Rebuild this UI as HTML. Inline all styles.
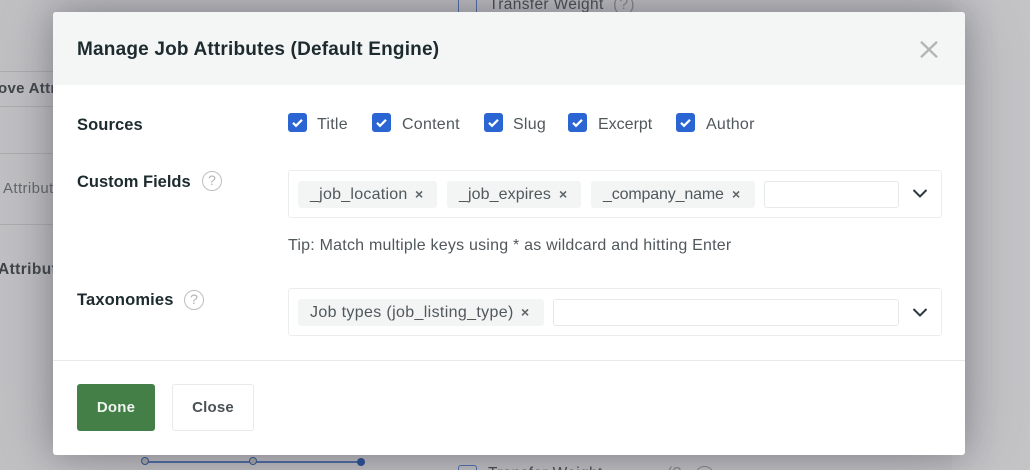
<!DOCTYPE html>
<html>
<head>
<meta charset="utf-8">
<style>
html,body{margin:0;padding:0;width:1030px;height:470px;overflow:hidden;background:#c0c0c2;font-family:"Liberation Sans",sans-serif}
*{box-sizing:border-box}
#root{position:relative;width:1030px;height:470px;overflow:hidden;background:#c2c2c4}
.a{position:absolute;white-space:nowrap}
.modal{position:absolute;left:53px;top:12px;width:912px;height:443px;background:#fff;border-radius:3px;box-shadow:0 0 30px rgba(70,70,85,.36),0 0 70px rgba(70,70,85,.3)}
.lab{font-weight:bold;font-size:16.5px;color:#1d2b2f;line-height:20px}
.opt{font-size:16px;color:#50585c;line-height:20px;letter-spacing:.25px}
.cb{position:absolute;top:113px;width:19px;height:19px;background:#2b65d4;border-radius:3px}
.cb svg{position:absolute;left:0;top:0}
.box{position:absolute;left:288px;width:654px;height:48px;border:1px solid #ebedee;border-radius:3px;background:#fff}
.tag{position:absolute;height:27px;background:#f3f5f5;border-radius:3px}
.tag span{position:absolute;top:0;line-height:27px;font-size:16px;color:#50585c;white-space:nowrap}
.tag span.x{font-size:14px;font-weight:bold;color:#5c6468;line-height:26px}
.inp{position:absolute;height:27px;border:1px solid #e6e8e9;border-radius:3px;background:#fff}
.help{position:absolute;width:20px;height:20px;border:1.5px solid #bcbfc0;border-radius:50%;color:#b0b3b4;font-size:14px;line-height:17px;text-align:center}
</style>
</head>
<body>
<div id="root">
<!-- background page -->
<div class="a" style="left:952px;top:0;width:78px;height:470px;background:rgba(255,255,255,.05)"></div>
<div class="a" style="left:0;top:71px;width:53px;height:1px;background:#aeaeb0"></div>
<div class="a" style="left:0;top:106px;width:53px;height:1px;background:#aeaeb0"></div>
<div class="a" style="left:0;top:153px;width:53px;height:1px;background:#aeaeb0"></div>
<div class="a" style="left:0;top:224px;width:53px;height:1px;background:#aeaeb0"></div>
<div class="a" style="left:-2px;top:79px;font-size:15px;font-weight:bold;color:#3e4447;line-height:20px;letter-spacing:.3px">ove Attr</div>
<div class="a" style="left:3px;top:179px;font-size:15px;color:#62676a;line-height:20px;letter-spacing:.4px">Attribut</div>
<div class="a" style="left:-2px;top:260px;font-size:15.5px;font-weight:bold;color:#3e4447;line-height:20px;letter-spacing:.4px">Attribut</div>
<div class="a" style="left:458px;top:0;width:1px;height:12px;background:#4a6cb0"></div>
<div class="a" style="left:476px;top:0;width:1px;height:12px;background:#4a6cb0"></div>
<div class="a" style="left:489px;top:-5px;font-size:15.5px;color:#45494c;line-height:20px;letter-spacing:.35px">Transfer Weight</div>
<div class="a" style="left:613px;top:-5px;font-size:16px;color:#85888a;line-height:20px;letter-spacing:1px">(?)</div>
<div class="a" style="left:145px;top:461px;width:216px;height:2px;background:#4a6aa5"></div>
<div class="a" style="left:141px;top:457px;width:8px;height:8px;border:1.5px solid #2d5596;border-radius:50%;background:#aaa"></div>
<div class="a" style="left:249px;top:457px;width:8px;height:8px;border:1.5px solid #2d5596;border-radius:50%;background:#aaa"></div>
<div class="a" style="left:357px;top:458px;width:8px;height:8px;border-radius:50%;background:#234c96"></div>
<div class="a" style="left:458px;top:465px;width:19px;height:19px;border:1.5px solid #4a6cb0;border-radius:3px"></div>
<div class="a" style="left:488px;top:464px;font-size:15.5px;color:#45494c;line-height:20px;letter-spacing:.35px">Transfer Weight</div>
<div class="a" style="left:667px;top:464px;font-size:16px;color:#85888a;line-height:20px">(?</div>
<div class="a" style="left:695px;top:466px;width:19px;height:19px;border:1.5px solid #85888a;border-radius:50%"></div>

<!-- modal -->
<div class="modal">
  <div style="position:absolute;left:0;top:0;width:912px;height:73px;background:#f4f6f5;border-radius:3px 3px 0 0"></div>
  <div style="position:absolute;left:0;top:348px;width:912px;height:1px;background:#e8eaea"></div>
</div>
<div class="a" style="left:77px;top:38px;font-size:19px;font-weight:bold;color:#1d2b2f;line-height:24px;letter-spacing:.19px">Manage Job Attributes (Default Engine)</div>
<svg class="a" style="left:920px;top:41px" width="18" height="17" viewBox="0 0 18 17"><path d="M1 .8L17 16.2M17 .8L1 16.2" stroke="#b3b5b6" stroke-width="2.4" fill="none"/></svg>

<div class="a lab" style="left:77px;top:115px;letter-spacing:.1px">Sources</div>
<div class="cb" style="left:288px"><svg width="19" height="19"><path d="M5 9.8l3 3 6-6" stroke="#fff" stroke-width="2.2" fill="none"/></svg></div>
<div class="a opt" style="left:317px;top:115px">Title</div>
<div class="cb" style="left:372px"><svg width="19" height="19"><path d="M5 9.8l3 3 6-6" stroke="#fff" stroke-width="2.2" fill="none"/></svg></div>
<div class="a opt" style="left:402px;top:115px">Content</div>
<div class="cb" style="left:484px"><svg width="19" height="19"><path d="M5 9.8l3 3 6-6" stroke="#fff" stroke-width="2.2" fill="none"/></svg></div>
<div class="a opt" style="left:513px;top:115px">Slug</div>
<div class="cb" style="left:568px"><svg width="19" height="19"><path d="M5 9.8l3 3 6-6" stroke="#fff" stroke-width="2.2" fill="none"/></svg></div>
<div class="a opt" style="left:598px;top:115px;letter-spacing:0">Excerpt</div>
<div class="cb" style="left:676px"><svg width="19" height="19"><path d="M5 9.8l3 3 6-6" stroke="#fff" stroke-width="2.2" fill="none"/></svg></div>
<div class="a opt" style="left:706px;top:115px">Author</div>

<div class="a lab" style="left:77px;top:172px">Custom Fields</div>
<div class="help" style="left:202px;top:171px">?</div>
<div class="box" style="top:170px"></div>
<div class="tag" style="left:298px;top:181px;width:139px"><span style="left:12px;letter-spacing:.25px">_job_location</span><span class="x" style="left:117px">×</span></div>
<div class="tag" style="left:447px;top:181px;width:134px"><span style="left:12px;letter-spacing:.1px">_job_expires</span><span class="x" style="left:112px">×</span></div>
<div class="tag" style="left:591px;top:181px;width:164px"><span style="left:12px;letter-spacing:-.15px">_company_name</span><span class="x" style="left:141px">×</span></div>
<div class="inp" style="left:764px;top:181px;width:135px"></div>
<svg class="a" style="left:912px;top:188px" width="16" height="11" viewBox="0 0 16 11"><path d="M1.5 2L8 8.5L14.5 2" stroke="#2c3a3e" stroke-width="2" fill="none"/></svg>

<div class="a" style="left:288px;top:236px;font-size:16px;color:#50585c;line-height:20px;letter-spacing:.22px">Tip: Match multiple keys using * as wildcard and hitting Enter</div>

<div class="a lab" style="left:77px;top:290px;letter-spacing:.15px">Taxonomies</div>
<div class="help" style="left:184px;top:290px">?</div>
<div class="box" style="top:288px"></div>
<div class="tag" style="left:298px;top:299px;width:246px"><span style="left:12px;letter-spacing:.35px">Job types (job_listing_type)</span><span class="x" style="left:223px">×</span></div>
<div class="inp" style="left:553px;top:299px;width:346px"></div>
<svg class="a" style="left:912px;top:307px" width="16" height="11" viewBox="0 0 16 11"><path d="M1.5 2L8 8.5L14.5 2" stroke="#2c3a3e" stroke-width="2" fill="none"/></svg>

<div class="a" style="left:77px;top:384px;width:78px;height:47px;background:#437f46;border-radius:3px;color:#f0f4f0;font-weight:bold;font-size:15px;line-height:47px;text-align:center;letter-spacing:.2px">Done</div>
<div class="a" style="left:172px;top:384px;width:82px;height:47px;background:#fff;border:1px solid #e8eaea;border-radius:3px;color:#4a5256;font-weight:bold;font-size:15px;line-height:45px;text-align:center;letter-spacing:.2px">Close</div>
</div>
</body>
</html>
